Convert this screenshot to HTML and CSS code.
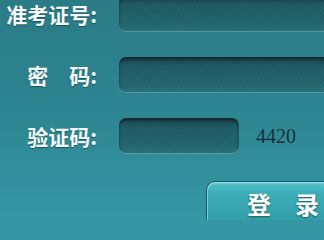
FILE: index.html
```html
<!DOCTYPE html>
<html lang="zh-CN">
<head>
<meta charset="utf-8">
<title>登录</title>
<link rel="stylesheet" href="styles.css">
</head>
<body>
<div class="page">
  <form class="login">
    <div class="row">
      <label class="label">准考证号:</label>
      <input class="field wide" type="text">
    </div>
    <div class="row">
      <label class="label">密　码:</label>
      <input class="field wide" type="password">
    </div>
    <div class="row">
      <label class="label">验证码:</label>
      <input class="field short" type="text">
      <span class="code">4420</span>
    </div>
    <div class="actions">
      <button class="submit" type="button">登　录</button>
    </div>
  </form>
</div>
</body>
</html>
```
FILE: styles.css
```css
html, body {
  margin: 0;
  padding: 0;
}
body {
  background: #3597a4;
  font-family: "Noto Sans CJK SC", "Noto Sans", sans-serif;
}
.page {
  width: 324px;
  height: 220px;
  overflow: hidden;
  background: linear-gradient(180deg, #2a7b86 0%, #2d8591 50%, #3597a4 100%);
}
.login {
  display: flex;
  flex-direction: column;
  gap: 26px;
  margin: 0;
  position: relative;
  top: -4px;
}
.row {
  display: flex;
  align-items: center;
  gap: 22px;
  height: 35px;
}
.label {
  flex: 0 0 97px;
  text-align: right;
  color: #f4fbfb;
  font-size: 21px;
  font-weight: 700;
  line-height: 22px;
  white-space: nowrap;
  text-shadow: 0 1px 1px rgba(10, 50, 56, 0.6);
}
.field {
  box-sizing: border-box;
  height: 35px;
  border: none;
  border-radius: 7px;
  background:
    repeating-linear-gradient(45deg, rgba(255,255,255,0.025) 0 1px, rgba(0,0,0,0) 1px 3px),
    repeating-linear-gradient(-45deg, rgba(0,0,0,0.05) 0 1px, rgba(0,0,0,0) 1px 3px),
    linear-gradient(180deg, #173f47 0%, #1f5a63 25%, #236770 85%, #2a7279 100%);
  box-shadow: inset 0 2px 3px rgba(0, 0, 0, 0.45), 0 1px 0 rgba(120, 180, 175, 0.5);
  outline: none;
  padding: 0;
  flex: 0 0 auto;
}
.wide {
  width: 240px;
}
.short {
  width: 120px;
}
.code {
  margin-left: -5px;
  font-family: "Liberation Serif", serif;
  font-size: 20px;
  color: #1c2e3b;
  line-height: 22px;
}
.actions {
  display: flex;
  padding-left: 206px;
  margin-top: 2px;
}
.submit {
  flex: 0 0 auto;
  box-sizing: border-box;
  width: 150px;
  height: 50px;
  margin: 0;
  padding: 9px 0 0 40px;
  text-align: left;
  vertical-align: top;
  border: 1px solid #1b5961;
  border-radius: 9px;
  background: linear-gradient(180deg, #7ad6db 0px, #4fbcc4 3px, #3cadb7 12px, #35a3ad 30px, #3199a3 100%);
  box-shadow: inset 1px 1px 0 rgba(170, 235, 238, 0.6);
  color: #ffffff;
  font-family: "Noto Sans CJK SC", sans-serif;
  font-size: 24px;
  font-weight: 700;
  line-height: 26px;
  white-space: nowrap;
  text-shadow: 0 1px 2px rgba(10, 60, 66, 0.7);
  display: flex;
  align-items: flex-start;
}
```
